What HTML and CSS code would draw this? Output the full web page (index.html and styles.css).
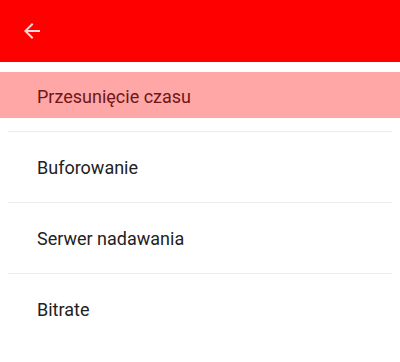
FILE: index.html
```html
<!DOCTYPE html>
<html lang="pl">
<head>
<meta charset="utf-8">
<link rel="stylesheet" href="styles.css">
</head>
<body>
<header class="toolbar">
  <svg class="back" width="24" height="24" viewBox="0 0 24 24" aria-hidden="true">
    <path d="M20 11H7.83l5.59-5.59L12 4l-8 8 8 8 1.41-1.41L7.83 13H20v-2z" fill="#fbd6d6"/>
  </svg>
</header>
<ul class="list">
  <li class="item item-active"><span class="label">Przesunięcie czasu</span></li>
  <li class="item"><span class="label">Buforowanie</span></li>
  <li class="item"><span class="label">Serwer nadawania</span></li>
  <li class="item"><span class="label">Bitrate</span></li>
</ul>
</body>
</html>
```
FILE: styles.css
```css
html, body {
  margin: 0;
  padding: 0;
  background: #ffffff;
  font-family: Roboto, "Noto Sans", sans-serif;
}
.toolbar {
  height: 62px;
  background: #ff0000;
  display: flex;
  align-items: center;
  padding-left: 20px;
  box-sizing: border-box;
}
.back {
  display: block;
}
.list {
  list-style: none;
  margin: 0;
  padding: 0;
}
.item {
  height: 71px;
  margin: 0 8px;
  border-bottom: 1px solid #ececec;
  display: flex;
  align-items: center;
  box-sizing: border-box;
  padding-left: 29px;
  font-size: 18px;
  color: #222222;
}
.item:first-child {
  height: 70px;
}
.item:last-child {
  border-bottom: none;
}
.item-active {
  position: relative;
}
.item-active::before {
  content: "";
  position: absolute;
  left: -8px;
  right: -8px;
  top: 10px;
  height: 46px;
  background: rgba(255, 0, 0, 0.35);
}
.label {
  position: relative;
}
.item-active .label {
  color: #6f1616;
}
```
